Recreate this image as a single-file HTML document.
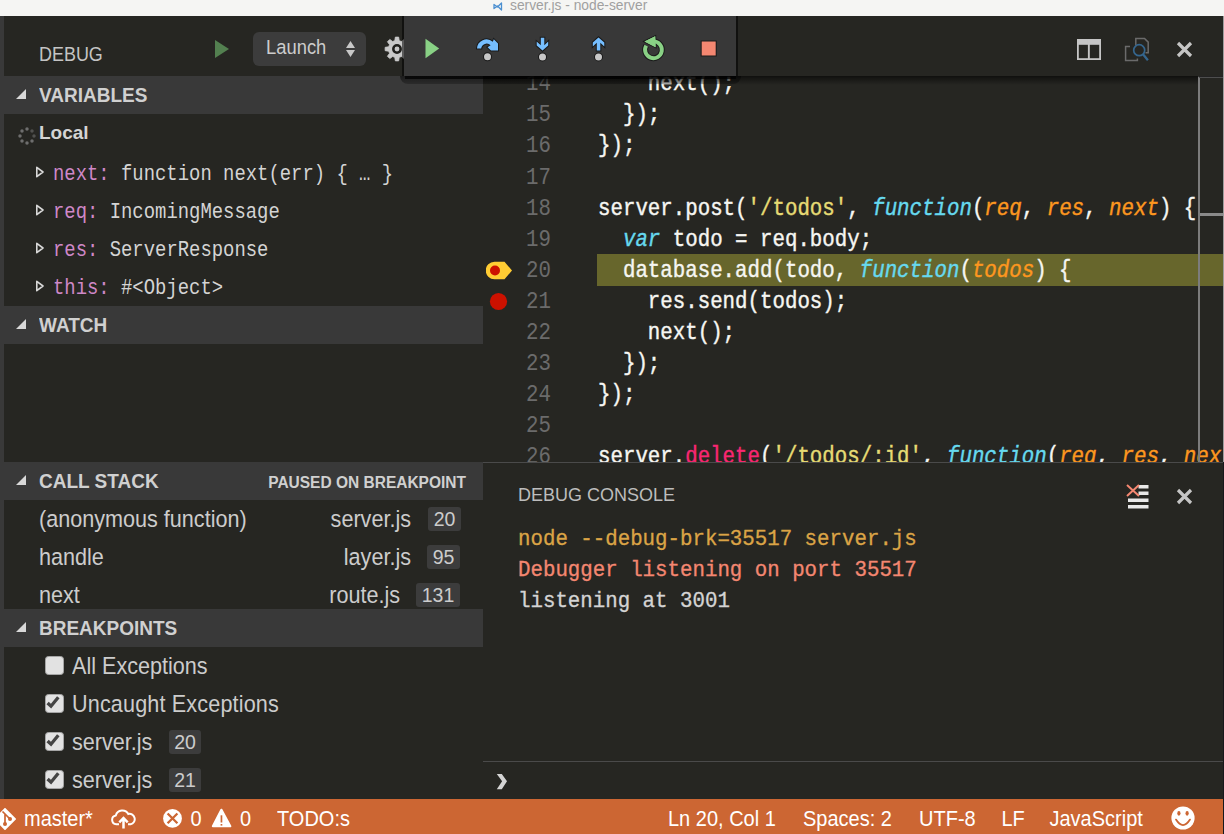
<!DOCTYPE html>
<html><head><meta charset="utf-8">
<style>
*{margin:0;padding:0;box-sizing:border-box}
html,body{width:1224px;height:834px;overflow:hidden;background:#262622;font-family:"Liberation Sans",sans-serif}
.a{position:absolute;white-space:pre}
#title{left:0;top:0;width:1224px;height:16px;background:#f5f5f3}
#leftstrip{left:0;top:16px;width:4px;height:783px;background:#393939}
.hdr{position:absolute;left:4px;width:479px;height:38px;background:#393939}
.hdr .t{position:absolute;left:35px;top:0;line-height:38px;font-weight:bold;font-size:19px;color:#d0d0d0;transform:scaleY(1.1);transform-origin:0 50%}
.tri{position:absolute;left:12px;top:13px;width:0;height:0;border-left:10px solid transparent;border-bottom:10px solid #d8d8d8}
.ln{position:absolute;left:483px;width:68px;text-align:right;font-family:"Liberation Mono",monospace;font-size:20.77px;color:#6b6b6b;line-height:31.09px;height:31.09px;margin-top:1.6px;transform:scaleY(1.15);transform-origin:0 50%}
.cl{position:absolute;left:598px;font-family:"Liberation Mono",monospace;font-size:20.77px;color:#f6f6f2;-webkit-text-stroke:0.35px currentColor;line-height:31.09px;height:31.09px;white-space:pre;margin-top:1.6px;transform:scaleY(1.15);transform-origin:0 50%}
.kw{color:#66d9ef;font-style:italic}
.str{color:#e6db74}
.par{color:#fd971f;font-style:italic}
.del{color:#f92672}
.var{position:absolute;left:53px;font-family:"Liberation Mono",monospace;font-size:18.9px;line-height:38px;color:#d4d4d4;white-space:pre;margin-top:2.2px;transform:scaleY(1.15);transform-origin:0 50%}
.var .k{color:#cf88c8}
.vtri{position:absolute;left:35px;width:10px;height:14px}
.row{position:absolute;font-size:21.6px;line-height:38px;color:#cccccc;white-space:pre;transform:scaleY(1.1);transform-origin:0 50%}
.badge{position:absolute;background:#3c3c3c;border-radius:3px;color:#cccccc;font-size:19.5px;text-align:center;line-height:24px;height:24px}
.cb{position:absolute;left:45px;width:19px;height:19px;border-radius:3.5px;background:#e2e2e2;border:1.3px solid #a5a5a5}
.cb svg{position:absolute}
#status{left:0;top:799px;width:1224px;height:35px;background:#cc6633}
.st{position:absolute;top:802px;line-height:35px;color:#ffffff;font-size:20px;white-space:pre;transform:scaleY(1.06);transform-origin:0 50%}
.con{position:absolute;left:518px;font-family:"Liberation Mono",monospace;font-size:20.77px;-webkit-text-stroke:0.3px currentColor;line-height:31.09px;white-space:pre;margin-top:0.8px;transform:scaleY(1.1);transform-origin:0 50%}
</style></head><body>
<div class="a" id="title"></div>
<div class="a" style="left:510px;top:-2px;font-size:13.8px;line-height:16px;color:#a0a0a0">server.js - node-server</div>
<svg class="a" style="left:493px;top:2px" width="10" height="9" viewBox="0 0 10 9"><path d="M1 2.5 L4.5 5 L8.5 1 V8 L4.5 4 L1 6.5 Z" fill="none" stroke="#4b8fd0" stroke-width="1.3" stroke-linejoin="round"/></svg>
<div class="a" id="leftstrip"></div>

<!-- ===== EDITOR ===== -->
<div class="a" style="left:483px;top:76px;width:741px;height:386px;overflow:hidden">
 <div style="position:absolute;left:-483px;top:-76px;width:1224px;height:834px">
  <div class="a" style="left:597px;top:254px;width:627px;height:31.5px;background:#67662c"></div>
  <div class="ln" style="top:66.7px">14</div><div class="cl" style="top:66.7px">    next();</div>
  <div class="ln" style="top:97.8px">15</div><div class="cl" style="top:97.8px">  });</div>
  <div class="ln" style="top:128.9px">16</div><div class="cl" style="top:128.9px">});</div>
  <div class="ln" style="top:160px">17</div>
  <div class="ln" style="top:191.1px">18</div><div class="cl" style="top:191.1px">server.post(<span class="str">'/todos'</span>, <span class="kw">function</span>(<span class="par">req</span>, <span class="par">res</span>, <span class="par">next</span>) {</div>
  <div class="ln" style="top:222.2px">19</div><div class="cl" style="top:222.2px">  <span class="kw">var</span> todo = req.body;</div>
  <div class="ln" style="top:253.2px">20</div><div class="cl" style="top:253.2px">  database.add(todo, <span class="kw">function</span>(<span class="par">todos</span>) {</div>
  <div class="ln" style="top:284.3px">21</div><div class="cl" style="top:284.3px">    res.send(todos);</div>
  <div class="ln" style="top:315.4px">22</div><div class="cl" style="top:315.4px">    next();</div>
  <div class="ln" style="top:346.5px">23</div><div class="cl" style="top:346.5px">  });</div>
  <div class="ln" style="top:377.6px">24</div><div class="cl" style="top:377.6px">});</div>
  <div class="ln" style="top:408.7px">25</div>
  <div class="ln" style="top:439.8px">26</div><div class="cl" style="top:439.8px">server.<span class="del">delete</span>(<span class="str">'/todos/:id'</span>, <span class="kw">function</span>(<span class="par">req</span>, <span class="par">res</span>, <span class="par">next</span>) {</div>
  <!-- gutter breakpoint icons -->
  <svg class="a" style="left:486px;top:261px" width="27" height="19" viewBox="0 0 27 19"><path d="M8.5 0.7 H18.5 L26 9.5 L18.5 18.3 H8.5 A8.8 8.8 0 0 1 8.5 0.7 Z" fill="#ffcc33"/><circle cx="9" cy="9.5" r="5" fill="#cc1100"/></svg>
  <svg class="a" style="left:489px;top:292px" width="19" height="19"><circle cx="9.5" cy="9.5" r="8.6" fill="#cc1100"/></svg>
  <!-- overview ruler -->
  <div class="a" style="left:1198px;top:76px;width:1.6px;height:386px;background:#7c7c7c"></div>
  <div class="a" style="left:1199px;top:76px;width:25px;height:1.5px;background:#4e4e4e"></div>
  <div class="a" style="left:1200px;top:212.5px;width:24px;height:3px;background:#8a8a8a"></div>
  <!-- top scroll shadow -->
 </div>
</div>

<!-- editor top-right actions -->
<svg class="a" style="left:1076.5px;top:39px" width="24" height="21" viewBox="0 0 24 21"><rect x="0.9" y="0.9" width="22.2" height="19.2" fill="none" stroke="#c5c5c5" stroke-width="1.8"/><rect x="0" y="0" width="24" height="5.8" fill="#c5c5c5"/><rect x="10.9" y="0" width="1.9" height="21" fill="#c5c5c5"/></svg>
<svg class="a" style="left:1124px;top:37px" width="26" height="26" viewBox="0 0 26 26"><path d="M11.8 8.5 V1.4 H20.5 L24.2 5.1 V15.8 H21.5" fill="none" stroke="#6b6b6b" stroke-width="1.5"/><path d="M6 9.6 H1.6 V23.6 H13.4 V21.5" fill="none" stroke="#6b6b6b" stroke-width="1.5"/><circle cx="15.2" cy="13.2" r="5.5" fill="none" stroke="#35668e" stroke-width="1.7"/><path d="M19 17.2 L23.9 23.2" stroke="#35668e" stroke-width="2.3"/></svg>
<svg class="a" style="left:1176px;top:41px" width="17" height="17" viewBox="0 0 17 17"><path d="M2 2 L15 15 M15 2 L2 15" stroke="#c5c5c5" stroke-width="3.2"/></svg>

<!-- ===== SIDEBAR ===== -->
<div class="a" style="left:39px;top:38px;font-size:19.5px;line-height:30px;color:#c4c4c4;transform:scaleX(0.92) scaleY(1.03);transform-origin:0 0">DEBUG</div>
<div class="a" style="left:215px;top:40px;width:0;height:0;border-top:9.5px solid transparent;border-bottom:9.5px solid transparent;border-left:14px solid #538050"></div>
<div class="a" style="left:253px;top:32px;width:113px;height:34px;background:#3c3c3c;border-radius:6px"></div>
<div class="a" style="left:266px;top:30.8px;font-size:18.4px;line-height:34px;color:#cccccc;transform:scaleY(1.08);transform-origin:0 50%">Launch</div>
<svg class="a" style="left:345px;top:40px" width="11" height="18"><path d="M1 8 L5.5 1 L10 8 Z M1 10 L5.5 17 L10 10 Z" fill="#c8c8c8"/></svg>
<svg class="a" style="left:383.5px;top:36.4px" width="26" height="26" viewBox="0 0 26 26"><path d="M9.71 5.05 L10.77 4.69 L11.33 1.12 L14.67 1.12 L15.23 4.69 L16.29 5.05 L17.30 5.55 L20.22 3.42 L22.58 5.78 L20.45 8.70 L20.95 9.71 L21.31 10.77 L24.88 11.33 L24.88 14.67 L21.31 15.23 L20.95 16.29 L20.45 17.30 L22.58 20.22 L20.22 22.58 L17.30 20.45 L16.29 20.95 L15.23 21.31 L14.67 24.88 L11.33 24.88 L10.77 21.31 L9.71 20.95 L8.70 20.45 L5.78 22.58 L3.42 20.22 L5.55 17.30 L5.05 16.29 L4.69 15.23 L1.12 14.67 L1.12 11.33 L4.69 10.77 L5.05 9.71 L5.55 8.70 L3.42 5.78 L5.78 3.42 L8.70 5.55 Z" fill="#c8c8c8" stroke="#c8c8c8" stroke-width="0.8" stroke-linejoin="round"/><circle cx="13" cy="13" r="3.7" fill="#c8c8c8" stroke="#1f1f1c" stroke-width="2.5"/></svg>

<div class="hdr" style="top:76px"><div class="tri"></div><div class="t">VARIABLES</div></div>
<svg class="a" style="left:17.6px;top:126.6px" width="18" height="18" viewBox="0 0 18 18"><g fill="#6e6e6e"><circle cx="9" cy="2" r="1.75"/><circle cx="14" cy="4" r="1.75" opacity=".6"/><circle cx="16" cy="9" r="1.75" opacity=".6"/><circle cx="14" cy="14" r="1.75"/><circle cx="9" cy="16" r="1.75"/><circle cx="4" cy="14" r="1.75"/><circle cx="2" cy="9" r="1.75"/><circle cx="4" cy="4" r="1.75"/></g></svg>
<div class="a" style="left:39px;top:114px;font-size:19px;line-height:38px;font-weight:bold;color:#d4d4d4">Local</div>

<svg class="vtri" style="top:165px" viewBox="0 0 10 14"><path d="M1.8 2.3 L8 7 L1.8 11.7 Z" fill="none" stroke="#d8d8d8" stroke-width="1.6" stroke-linejoin="round"/></svg><div class="var" style="top:153px"><span class="k">next:</span> function next(err) { … }</div>
<svg class="vtri" style="top:203px" viewBox="0 0 10 14"><path d="M1.8 2.3 L8 7 L1.8 11.7 Z" fill="none" stroke="#d8d8d8" stroke-width="1.6" stroke-linejoin="round"/></svg><div class="var" style="top:191px"><span class="k">req:</span> IncomingMessage</div>
<svg class="vtri" style="top:241px" viewBox="0 0 10 14"><path d="M1.8 2.3 L8 7 L1.8 11.7 Z" fill="none" stroke="#d8d8d8" stroke-width="1.6" stroke-linejoin="round"/></svg><div class="var" style="top:229px"><span class="k">res:</span> ServerResponse</div>
<svg class="vtri" style="top:279px" viewBox="0 0 10 14"><path d="M1.8 2.3 L8 7 L1.8 11.7 Z" fill="none" stroke="#d8d8d8" stroke-width="1.6" stroke-linejoin="round"/></svg><div class="var" style="top:267px"><span class="k">this:</span> #&lt;Object&gt;</div>

<div class="hdr" style="top:306px"><div class="tri"></div><div class="t">WATCH</div></div>
<div class="hdr" style="top:462px"><div class="tri"></div><div class="t">CALL STACK</div><div class="a" style="right:17px;top:1.3px;line-height:38px;font-size:15.5px;font-weight:bold;color:#d0d0d0;transform:scaleY(1.12);transform-origin:0 50%">PAUSED ON BREAKPOINT</div></div>

<div class="row" style="left:39px;top:500px">(anonymous function)</div>
<div class="row" style="right:813px;top:500px">server.js</div><div class="badge" style="left:428px;top:507px;width:33px">20</div>
<div class="row" style="left:39px;top:538px">handle</div>
<div class="row" style="right:813px;top:538px">layer.js</div><div class="badge" style="left:427px;top:545px;width:33px">95</div>
<div class="row" style="left:39px;top:576px">next</div>
<div class="row" style="right:824px;top:576px">route.js</div><div class="badge" style="left:416px;top:583px;width:44px">131</div>

<div class="hdr" style="top:609px"><div class="tri"></div><div class="t">BREAKPOINTS</div></div>
<div class="cb" style="top:656px"></div><div class="row" style="left:72px;top:646.5px">All Exceptions</div>
<div class="cb" style="top:694px"><svg width="15" height="15" style="left:0;top:0" viewBox="0 0 15 15"><path d="M1.6 8 L5 11.2 L12.3 2.2" fill="none" stroke="#444" stroke-width="3.3"/></svg></div><div class="row" style="left:72px;top:684.5px;letter-spacing:0.15px">Uncaught Exceptions</div>
<div class="cb" style="top:732px"><svg width="15" height="15" style="left:0;top:0" viewBox="0 0 15 15"><path d="M1.6 8 L5 11.2 L12.3 2.2" fill="none" stroke="#444" stroke-width="3.3"/></svg></div><div class="row" style="left:72px;top:723px">server.js</div><div class="badge" style="left:169px;top:730px;width:32px">20</div>
<div class="cb" style="top:770px"><svg width="15" height="15" style="left:0;top:0" viewBox="0 0 15 15"><path d="M1.6 8 L5 11.2 L12.3 2.2" fill="none" stroke="#444" stroke-width="3.3"/></svg></div><div class="row" style="left:72px;top:761px">server.js</div><div class="badge" style="left:169px;top:768px;width:32px">21</div>

<!-- ===== DEBUG TOOLBAR ===== -->
<div class="a" style="left:483px;top:76px;width:741px;height:1px;background:rgba(0,0,0,0.55)"></div>
<div class="a" style="left:483px;top:77px;width:715px;height:8px;background:linear-gradient(rgba(0,0,0,0.5),rgba(0,0,0,0))"></div>
<div class="a" style="left:400px;top:76px;width:341px;height:8px;background:linear-gradient(rgba(0,0,0,0.5),rgba(0,0,0,0.25));border-radius:0 0 8px 8px"></div>
<div class="a" style="left:405px;top:76px;width:331px;height:2.5px;background:rgba(0,0,0,0.7)"></div>
<div class="a" style="left:402px;top:16px;width:2px;height:60px;background:rgba(0,0,0,0.55)"></div>
<div class="a" style="left:736px;top:16px;width:1.5px;height:60px;background:rgba(0,0,0,0.55)"></div>
<div class="a" style="left:404px;top:16px;width:332px;height:60px;background:#383838"></div>
<svg class="a" style="left:404px;top:16px" width="332" height="60" viewBox="0 0 332 60">
 <path d="M21.5 22.7 L35.2 32.5 L21.5 42.3 Z" fill="#89d185"/>
 <g stroke="#1a1a1a" stroke-width="2" paint-order="stroke" stroke-linejoin="miter">
 <path d="M73 32.6 A9.5 9.5 0 0 1 88.8 25.8 L89.8 23.3 L94 27.6 V34.5 H87 L83.6 31.2 L86.6 29.3 A5.5 5.5 0 0 0 77.2 32.6 Z" fill="#75beff"/>
 <circle cx="83.5" cy="40.8" r="3.5" fill="#c8c8c8"/>
 <path d="M136.8 21.7 H140.3 V29.2 L144.2 25.6 V29.6 L138.5 34.6 L132.7 29.6 V25.6 L136.8 29.2 Z" fill="#75beff"/>
 <circle cx="138.5" cy="40.9" r="3.5" fill="#c8c8c8"/>
 <path d="M192.8 34.4 H196.3 V26.8 L200.3 30.4 V26.4 L194.5 21.4 L188.8 26.4 V30.4 L192.8 26.8 Z" fill="#75beff"/>
 <circle cx="194.5" cy="40.9" r="3.5" fill="#c8c8c8"/>
 </g>
 <path d="M249.5 25.4 A8.4 8.4 0 1 1 242.2 29.6" fill="none" stroke="#1a1a1a" stroke-width="5.8"/>
 <path d="M240.5 25.5 L251.2 20.3 L251.6 31.2 Z" fill="#89d185" stroke="#1a1a1a" stroke-width="2" paint-order="stroke"/>
 <path d="M249.5 25.4 A8.4 8.4 0 1 1 242.2 29.6" fill="none" stroke="#89d185" stroke-width="3.9"/>
 <path d="M240.5 25.5 L251.2 20.3 L251.6 31.2 Z" fill="#89d185"/>
 <rect x="297.7" y="25.5" width="14" height="14" fill="#f48771" stroke="#1a1a1a" stroke-width="2" paint-order="stroke"/>
</svg>

<!-- ===== DEBUG CONSOLE ===== -->
<div class="a" style="left:483px;top:462px;width:741px;height:1px;background:#4a4a4a"></div>
<div class="a" style="left:518px;top:483.3px;font-size:18px;line-height:24px;color:#bdbdbd;transform:scaleY(1.06);transform-origin:0 50%">DEBUG CONSOLE</div>
<svg class="a" style="left:1124px;top:482px" width="26" height="28" viewBox="0 0 26 28"><g fill="#e8e8e8"><rect x="14.5" y="3" width="10" height="3.5"/><rect x="14.5" y="9.5" width="10" height="3.5"/><rect x="4" y="16.5" width="20.5" height="3.5"/><rect x="4" y="23" width="20.5" height="3.5"/></g><path d="M3 3 L15 14 M15 3 L3 14" stroke="#f48771" stroke-width="2"/></svg>
<svg class="a" style="left:1176px;top:488px" width="17" height="17" viewBox="0 0 17 17"><path d="M2 2 L15 15 M15 2 L2 15" stroke="#c5c5c5" stroke-width="3.2"/></svg>
<div class="con" style="top:522px;color:#dba446">node --debug-brk=35517 server.js</div>
<div class="con" style="top:553px;color:#f48771">Debugger listening on port 35517</div>
<div class="con" style="top:584px;color:#d4d4d4">listening at 3001</div>
<div class="a" style="left:483px;top:761px;width:741px;height:1px;background:#4a4a4a"></div>
<svg class="a" style="left:494px;top:772px" width="16" height="20" viewBox="0 0 16 20"><path d="M2.8 2 H7.8 L13 9.3 L7.8 17.2 H2.8 L8.1 9.3 Z" fill="#d4d4d4"/></svg>

<!-- ===== STATUS BAR ===== -->
<div class="a" id="status"></div>
<svg class="a" style="left:-6px;top:807.6px" width="22" height="22" viewBox="0 0 22 22"><path d="M11 0.8 L21.2 11 L11 21.2 L0.8 11 Z" fill="#fff" stroke="#fff" stroke-linejoin="round" stroke-width="1.6"/><path d="M8.5 3.5 L11 6 V16 M11 6 L16 11" fill="none" stroke="#cc6633" stroke-width="1.7"/><circle cx="11" cy="16" r="2" fill="#cc6633"/><circle cx="16" cy="11" r="2" fill="#cc6633"/></svg>
<div class="st" style="left:24px">master*</div>
<svg class="a" style="left:110px;top:808.5px" width="27" height="20" viewBox="0 0 27 20"><path d="M9 15.3 H6.2 A4.5 4.5 0 0 1 5.8 6.4 A6.8 6.8 0 0 1 18.3 5 A5.2 5.2 0 0 1 20.6 15.3 H18" fill="none" stroke="#fff" stroke-width="2"/><path d="M13.5 19.5 V9.5 M9.3 13.3 L13.5 9 L17.7 13.3" fill="none" stroke="#fff" stroke-width="2.5"/></svg>
<svg class="a" style="left:163px;top:809px" width="20" height="20" viewBox="0 0 20 20"><circle cx="9.5" cy="9.4" r="9.4" fill="#fff"/><path d="M4.6 4.5 L14.4 14.3 M14.4 4.5 L4.6 14.3" stroke="#cc6633" stroke-width="2.3"/></svg>
<div class="st" style="left:190.5px">0</div>
<svg class="a" style="left:211px;top:808px" width="21" height="20" viewBox="0 0 21 20"><path d="M10.4 1.8 L19.3 18.2 H1.9 Z" fill="#fff" stroke="#fff" stroke-linejoin="round" stroke-width="2.2"/><rect x="9.6" y="7.3" width="1.7" height="7.2" fill="#cc6633"/><rect x="9.6" y="16" width="1.7" height="1.6" fill="#cc6633"/></svg>
<div class="st" style="left:240px">0</div>
<div class="st" style="left:277px">TODO:s</div>
<div class="st" style="left:668px">Ln 20, Col 1</div>
<div class="st" style="left:803px">Spaces: 2</div>
<div class="st" style="left:919px">UTF-8</div>
<div class="st" style="left:1001.5px">LF</div>
<div class="st" style="left:1049.5px">JavaScript</div>
<svg class="a" style="left:1169.5px;top:805.4px" width="26" height="26" viewBox="0 0 26 26"><circle cx="13" cy="13" r="11.6" fill="#fff"/><ellipse cx="8.9" cy="8.3" rx="1.6" ry="2.4" fill="#cc6633"/><ellipse cx="17.1" cy="8.3" rx="1.6" ry="2.4" fill="#cc6633"/><path d="M6 14.6 Q13 25.6 20 14.6" fill="none" stroke="#cc6633" stroke-width="1.8" stroke-linecap="round"/></svg>
<div class="a" style="left:1223px;top:16px;width:1px;height:446px;background:#9d9d9d"></div>
<div class="a" style="left:1223px;top:462px;width:1px;height:372px;background:#16181b"></div>
</body></html>
